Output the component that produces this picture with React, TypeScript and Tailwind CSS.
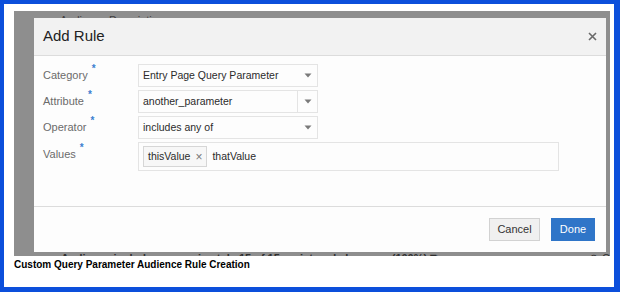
const font = { fontFamily: '"Liberation Sans", Arial, sans-serif' };

function Caret() {
  return (
    <svg width="8" height="5" viewBox="0 0 8 5" className="shrink-0">
      <path d="M0.5 0.5 L7.5 0.5 L4 4.5 Z" fill="#7a7a7a" />
    </svg>
  );
}

function Label({ text }: { text: string }) {
  return (
    <div className="w-[95px] shrink-0 text-[11px] text-[#6b6b6b] flex items-start">
      <span>{text}</span>
      <span className="ml-[4px] -mt-[3px] text-[10px] font-bold text-[#3b7fd0] leading-none">*</span>
    </div>
  );
}

function Select({ value, split }: { value: string; split?: boolean }) {
  return (
    <div className="w-[180px] h-[23px] flex items-center border border-[#e4e4e4] bg-[#fdfdfd] text-[10.5px] text-[#2b2b2b]">
      <span className="flex-1 pl-[4px] truncate">{value}</span>
      {split && <div className="h-full w-px bg-[#e4e4e4]" />}
      <div className="w-[19px] flex justify-center">
        <Caret />
      </div>
    </div>
  );
}

export default function App() {
  return (
    <div
      className="w-[620px] h-[292px] bg-[#0c4fdb] pt-[4px] pl-[4px] pr-[6px] pb-[5px]"
      style={font}
    >
      <div className="h-full bg-white pl-[10px] pt-[7px] flex flex-col">
        <div className="relative w-[596px] h-[245px] bg-[#8e8e8e] overflow-hidden">
          <div className="absolute left-[46px] top-[1px] text-[11px] text-[#3f3f3f]">
            Audience Description
          </div>
          <div className="absolute left-[47px] top-[239px] text-[11px] font-bold text-[#2f2f2f]">
            Audience includes approximately 15 of 15 registered shoppers (100%) ⧉
          </div>
          <div className="absolute left-[576px] top-[239px] text-[11px] text-[#2f2f2f]">
            ⟳ C
          </div>

          <div className="absolute left-[20px] top-[7px] w-[572px] h-[234px] bg-[#fdfdfd] flex flex-col">
            <div className="h-[38px] shrink-0 bg-[#f2f2f2] border-b border-[#dcdcdc] flex items-center justify-between pl-[9px] pr-[9px]">
              <span className="text-[15px] text-[#222]">Add Rule</span>
              <svg width="9" height="9" viewBox="0 0 9 9">
                <path d="M1 1 L8 8 M8 1 L1 8" stroke="#6a6a6a" strokeWidth="1.6" />
              </svg>
            </div>

            <div className="flex-1 pl-[9px] pt-[8px] flex flex-col gap-[3px]">
              <div className="flex items-center">
                <Label text="Category" />
                <Select value="Entry Page Query Parameter" />
              </div>
              <div className="flex items-center">
                <Label text="Attribute" />
                <Select value="another_parameter" split />
              </div>
              <div className="flex items-center">
                <Label text="Operator" />
                <Select value="includes any of" />
              </div>
              <div className="flex items-start">
                <div className="pt-[4px]">
                  <Label text="Values" />
                </div>
                <div className="w-[421px] h-[29px] border border-[#e4e4e4] bg-[#fdfdfd] flex items-center pl-[4px] gap-[5px] text-[10.5px] text-[#2b2b2b]">
                  <div className="h-[21px] flex items-center gap-[5px] border border-[#d6d6d6] bg-[#f7f7f7] px-[4px]">
                    <span>thisValue</span>
                    <span className="text-[12px] text-[#777] leading-none">×</span>
                  </div>
                  <span>thatValue</span>
                </div>
              </div>
            </div>

            <div className="h-[46px] shrink-0 border-t border-[#dcdcdc] flex items-center justify-end gap-[11px] pr-[11px]">
              <button className="h-[23px] w-[51px] border border-[#d2d2d2] bg-[#f0f0f0] text-[11px] text-[#333]">
                Cancel
              </button>
              <button className="h-[23px] w-[44px] bg-[#2f75c8] text-[11px] text-white">
                Done
              </button>
            </div>
          </div>
        </div>
        <div className="mt-[2px] text-[10px] leading-[14px] font-bold text-black">
          Custom Query Parameter Audience Rule Creation
        </div>
      </div>
    </div>
  );
}
